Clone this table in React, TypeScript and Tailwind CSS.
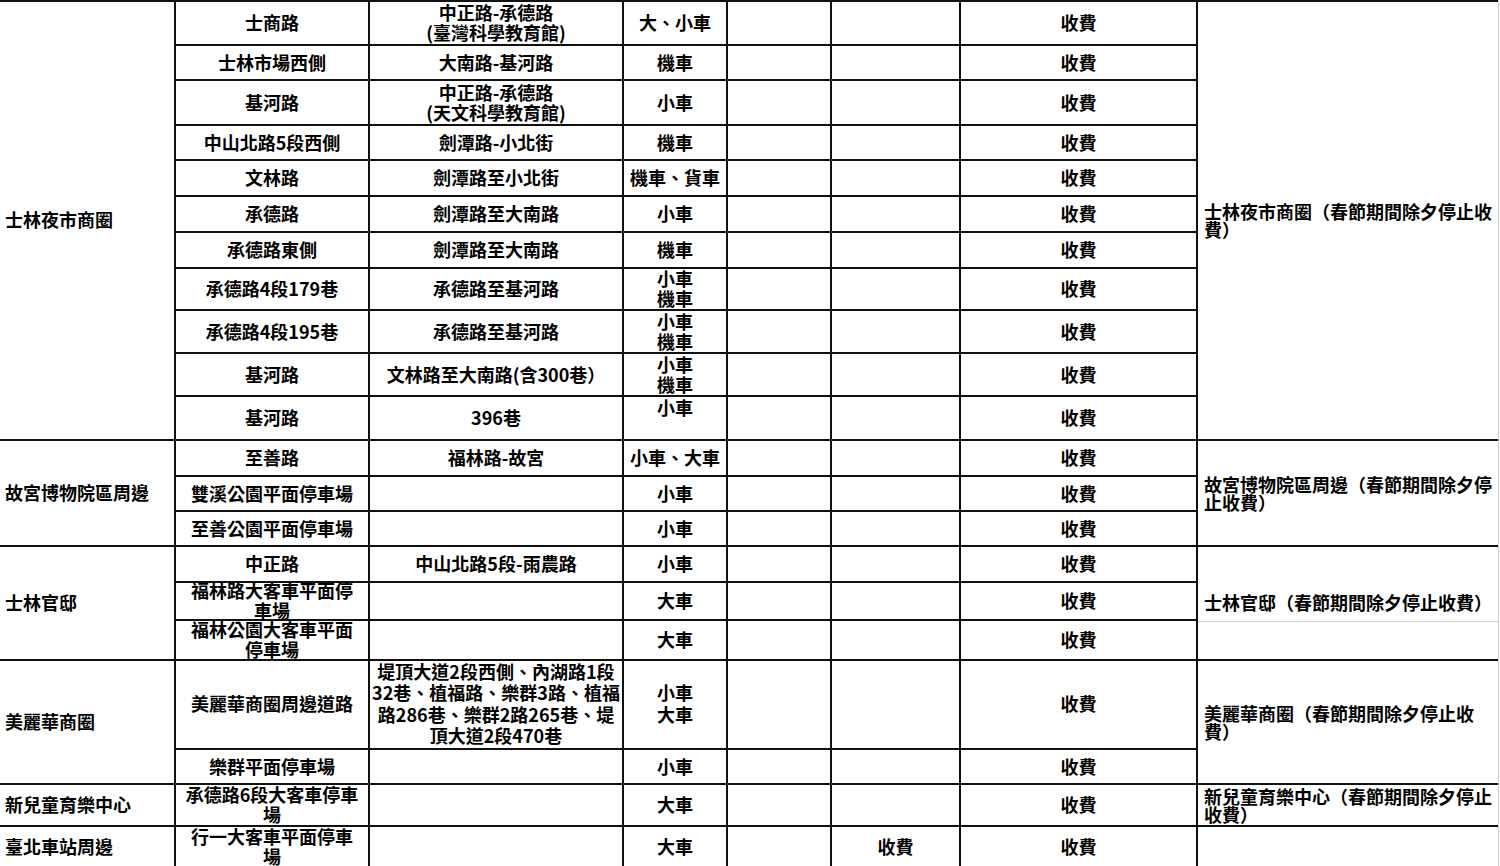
const rows: string[][] = [
  ["士商路", "中正路-承德路\n(臺灣科學教育館)", "大、小車", "", "", "收費"],
  ["士林市場西側", "大南路-基河路", "機車", "", "", "收費"],
  ["基河路", "中正路-承德路\n(天文科學教育館)", "小車", "", "", "收費"],
  ["中山北路5段西側", "劍潭路-小北街", "機車", "", "", "收費"],
  ["文林路", "劍潭路至小北街", "機車、貨車", "", "", "收費"],
  ["承德路", "劍潭路至大南路", "小車", "", "", "收費"],
  ["承德路東側", "劍潭路至大南路", "機車", "", "", "收費"],
  ["承德路4段179巷", "承德路至基河路", "小車\n機車", "", "", "收費"],
  ["承德路4段195巷", "承德路至基河路", "小車\n機車", "", "", "收費"],
  ["基河路", "文林路至大南路(含300巷）", "小車\n機車", "", "", "收費"],
  ["基河路", "396巷", "小車\n\u00a0", "", "", "收費"],
  ["至善路", "福林路-故宮", "小車、大車", "", "", "收費"],
  ["雙溪公園平面停車場", "", "小車", "", "", "收費"],
  ["至善公園平面停車場", "", "小車", "", "", "收費"],
  ["中正路", "中山北路5段-雨農路", "小車", "", "", "收費"],
  ["福林路大客車平面停\n車場", "", "大車", "", "", "收費"],
  ["福林公園大客車平面\n停車場", "", "大車", "", "", "收費"],
  [
    "美麗華商圈周邊道路",
    "堤頂大道2段西側、內湖路1段\n32巷、植福路、樂群3路、植福\n路286巷、樂群2路265巷、堤\n頂大道2段470巷",
    "小車\n大車",
    "",
    "",
    "收費",
  ],
  ["樂群平面停車場", "", "小車", "", "", "收費"],
  ["承德路6段大客車停車\n場", "", "大車", "", "", "收費"],
  ["行一大客車平面停車\n場", "", "大車", "", "收費", "收費"],
];

const groups = [
  { name: "士林夜市商圈", start: 0, span: "row-span-11", note: "士林夜市商圈（春節期間除夕停止收\n費）" },
  { name: "故宮博物院區周邊", start: 11, span: "row-span-3", note: "故宮博物院區周邊（春節期間除夕停\n止收費）" },
  { name: "士林官邸", start: 14, span: "row-span-3", note: "士林官邸（春節期間除夕停止收費）" },
  { name: "美麗華商圈", start: 17, span: "row-span-2", note: "美麗華商圈（春節期間除夕停止收\n費）" },
  { name: "新兒童育樂中心", start: 19, span: "row-span-1", note: "新兒童育樂中心（春節期間除夕停止\n收費）" },
  { name: "臺北車站周邊", start: 20, span: "row-span-1", note: "" },
];

const Lines = ({ text }: { text: string }) => (
  <div>
    {text.split("\n").map((line, i) => (
      <div key={i}>{line}</div>
    ))}
  </div>
);

const App = () => {
  const cells: JSX.Element[] = [];

  rows.forEach((row, r) => {
    const group = groups.find((g) => g.start === r);
    if (group) {
      cells.push(
        <div key={`g${r}`} className={`${group.span} bg-white flex items-center pl-[5px] pb-[2px]`}>
          {group.name}
        </div>
      );
    }
    row.forEach((cell, c) => {
      const lead = r === 17 ? "leading-[21.5px]" : "leading-[20px]";
      cells.push(
        <div key={`${r}-${c}`} className={`bg-white flex items-center justify-center text-center pb-[2px] ${lead}`}>
          {cell && <Lines text={cell} />}
        </div>
      );
    });
    if (group) {
      if (group.start === 14) {
        // 士林官邸: note sits in upper part, faint line below it
        cells.push(
          <div key={`n${r}`} className={`${group.span} bg-white flex flex-col`}>
            <div className="h-[74px] flex items-end pl-[6px] pb-[10px] leading-[18px]">{group.note}</div>
            <div className="border-t border-[#cfcfcf]" />
            <div className="flex-1" />
          </div>
        );
      } else {
        cells.push(
          <div key={`n${r}`} className={`${group.span} bg-white flex items-center pl-[6px] pb-[1px] leading-[18px]`}>
            {group.note && <Lines text={group.note} />}
          </div>
        );
      }
    }
  });

  return (
    <div className="w-[1500px] h-[866px] overflow-hidden bg-white font-['Noto_Sans_CJK_TC',sans-serif] text-[18px] font-bold text-black">
      <div className="w-[1499px] bg-[#111] pt-[2px] border-r border-[#cfcfcf] grid gap-[2px] grid-cols-[174px_192px_252px_102px_102px_127px_235px_300px] grid-rows-[42px_33px_43px_33px_34px_34px_34px_40px_41px_41px_42px_34px_33px_33px_34px_36px_38px_87px_33px_40px_40px]">
        {cells}
      </div>
    </div>
  );
};

export default App;
